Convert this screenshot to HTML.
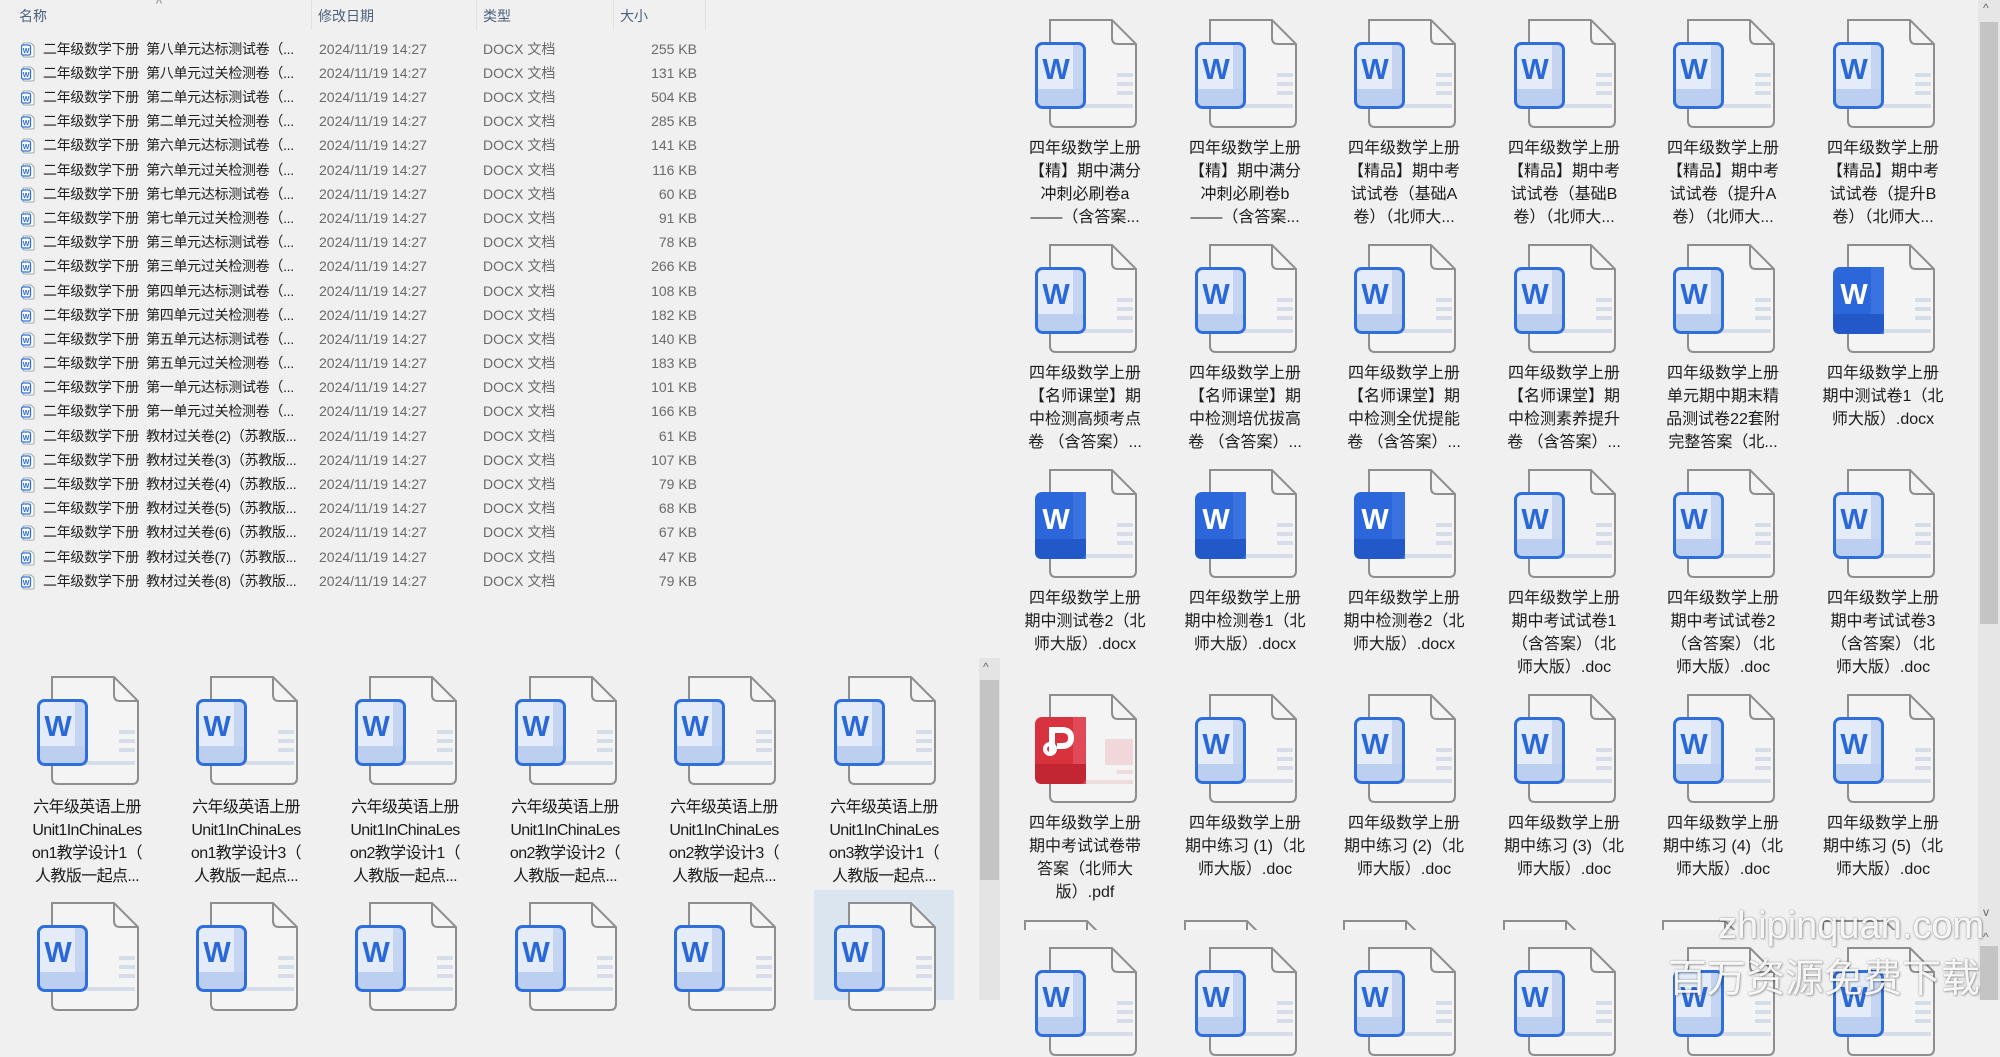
<!DOCTYPE html>
<html><head><meta charset="utf-8">
<style>
*{margin:0;padding:0;box-sizing:border-box}
body{width:2000px;height:1000px;overflow:hidden;background:#f0f0f0;position:relative;font-family:"Liberation Sans","Noto Sans CJK SC",sans-serif}
.a{position:absolute}
.hd{position:absolute;top:6px;font-size:14px;color:#4c607a}
.sep{position:absolute;top:0;width:1px;height:30px;background:#e2e2e2}
.row{position:absolute;left:0;height:24px;width:720px;font-size:14px;line-height:24px;white-space:nowrap}
.row svg{position:absolute;left:21px;top:5px}
.row .n{position:absolute;left:43px;color:#1e1e1e;letter-spacing:-0.3px}
.row .d{position:absolute;left:319px;color:#6a6a6a}
.row .t{position:absolute;left:483px;color:#6a6a6a}
.row .s{position:absolute;right:23px;color:#6a6a6a;text-align:right}
.it{position:absolute;width:150px}
.it svg{position:absolute;left:25px;top:0}
.lb{position:absolute;top:118px;left:0;width:150px;text-align:center;font-size:16px;line-height:23px;color:#1b1b1b;white-space:nowrap}
.lg .lb{top:120px;font-size:16px;letter-spacing:-0.6px}
.wm{position:absolute;color:rgba(255,255,255,0.92);text-shadow:0 0 2px rgba(0,0,0,.35),1px 1px 2px rgba(0,0,0,.25);font-family:"Liberation Sans","Noto Sans CJK SC",sans-serif;white-space:nowrap}
</style></head><body>
<svg width="0" height="0" style="position:absolute">
<defs>
<symbol id="pg" viewBox="0 0 102 110">
<path d="M15 1H77L101 25V102Q101 108 95 108H21Q15 108 15 102Z" fill="#f4f4f4" stroke="#8e8e8e" stroke-width="2"/>
<path d="M77 1V19Q77 25 83 25H101" fill="none" stroke="#8e8e8e" stroke-width="2"/>
<rect x="82" y="54" width="16" height="4" fill="#d6dde8"/><rect x="82" y="63" width="16" height="4" fill="#d6dde8"/><rect x="82" y="72" width="16" height="4" fill="#d6dde8"/><rect x="26" y="85" width="72" height="4" fill="#d6dde8"/>
</symbol>
<symbol id="wl" viewBox="0 0 102 110">
<use href="#pg"/>
<rect x="1.5" y="24.5" width="48" height="64" rx="6" fill="#e4ecf9"/>
<rect x="38" y="26" width="10" height="61" fill="#c5d5f1"/>
<rect x="3" y="70" width="45" height="17" fill="#bccff0"/>
<rect x="1.5" y="24.5" width="48" height="64" rx="6" fill="none" stroke="#2e6fdc" stroke-width="3"/>
<text x="21" y="60" font-family="Liberation Sans" font-weight="bold" font-size="29" fill="#2a68d8" text-anchor="middle">W</text>
</symbol>
<symbol id="wd" viewBox="0 0 102 110">
<use href="#pg"/>
<rect x="0" y="23" width="51" height="67" rx="7" fill="#2b67db"/>
<rect x="38" y="23" width="13" height="67" fill="#3a73e0"/>
<path d="M0 70H51V83Q51 90 44 90H7Q0 90 0 83Z" fill="#2258c8"/>
<text x="21" y="60" font-family="Liberation Sans" font-weight="bold" font-size="29" fill="#fff" text-anchor="middle">W</text>
</symbol>
<symbol id="pdf" viewBox="0 0 102 110">
<path d="M15 1H77L101 25V102Q101 108 95 108H21Q15 108 15 102Z" fill="#f4f4f4" stroke="#8e8e8e" stroke-width="2"/>
<path d="M77 1V19Q77 25 83 25H101" fill="none" stroke="#8e8e8e" stroke-width="2"/>
<rect x="70" y="45" width="28" height="26" fill="#f0d8da"/><rect x="82" y="76" width="16" height="4" fill="#eddcde"/><rect x="26" y="86" width="72" height="4" fill="#eddcde"/>
<rect x="0" y="23" width="51" height="67" rx="7" fill="#d8323f"/>
<rect x="38" y="23" width="13" height="67" fill="#e04a56"/>
<path d="M0 70H51V83Q51 90 44 90H7Q0 90 0 83Z" fill="#c32633"/>
<path d="M17 58V36H27Q36 36 36 44Q36 52 27 52H22" fill="none" stroke="#fff" stroke-width="6"/>
<circle cx="15" cy="55" r="5" fill="none" stroke="#fff" stroke-width="4"/>
</symbol>
<symbol id="sm" viewBox="0 0 14 16">
<path d="M3 1H10L13 4V14Q13 15 12 15H3Q2 15 2 14V2Q2 1 3 1Z" fill="#fff" stroke="#9aa" stroke-width="1"/>
<rect x="0.5" y="3" width="9" height="10" rx="1.5" fill="#fff" stroke="#2e6fdc" stroke-width="1.3"/>
<text x="5" y="11" font-size="7" font-weight="bold" fill="#2a68d8" text-anchor="middle" font-family="Liberation Sans">W</text>
</symbol>
</defs></svg>

<div class="hd" style="left:19px">名称</div>
<div class="a" style="left:156px;top:-4px;font-size:13px;color:#888">^</div>
<div class="hd" style="left:318px">修改日期</div>
<div class="hd" style="left:483px">类型</div>
<div class="hd" style="left:620px">大小</div>
<div class="sep" style="left:311px"></div><div class="sep" style="left:476px"></div><div class="sep" style="left:613px"></div><div class="sep" style="left:705px"></div>

<div class="row" style="top:37px"><svg width="14" height="16"><use href="#sm"/></svg><span class="n">二年级数学下册&nbsp;&nbsp;第八单元达标测试卷（...</span><span class="d">2024/11/19 14:27</span><span class="t">DOCX 文档</span><span class="s">255 KB</span></div>
<div class="row" style="top:61px"><svg width="14" height="16"><use href="#sm"/></svg><span class="n">二年级数学下册&nbsp;&nbsp;第八单元过关检测卷（...</span><span class="d">2024/11/19 14:27</span><span class="t">DOCX 文档</span><span class="s">131 KB</span></div>
<div class="row" style="top:85px"><svg width="14" height="16"><use href="#sm"/></svg><span class="n">二年级数学下册&nbsp;&nbsp;第二单元达标测试卷（...</span><span class="d">2024/11/19 14:27</span><span class="t">DOCX 文档</span><span class="s">504 KB</span></div>
<div class="row" style="top:109px"><svg width="14" height="16"><use href="#sm"/></svg><span class="n">二年级数学下册&nbsp;&nbsp;第二单元过关检测卷（...</span><span class="d">2024/11/19 14:27</span><span class="t">DOCX 文档</span><span class="s">285 KB</span></div>
<div class="row" style="top:133px"><svg width="14" height="16"><use href="#sm"/></svg><span class="n">二年级数学下册&nbsp;&nbsp;第六单元达标测试卷（...</span><span class="d">2024/11/19 14:27</span><span class="t">DOCX 文档</span><span class="s">141 KB</span></div>
<div class="row" style="top:158px"><svg width="14" height="16"><use href="#sm"/></svg><span class="n">二年级数学下册&nbsp;&nbsp;第六单元过关检测卷（...</span><span class="d">2024/11/19 14:27</span><span class="t">DOCX 文档</span><span class="s">116 KB</span></div>
<div class="row" style="top:182px"><svg width="14" height="16"><use href="#sm"/></svg><span class="n">二年级数学下册&nbsp;&nbsp;第七单元达标测试卷（...</span><span class="d">2024/11/19 14:27</span><span class="t">DOCX 文档</span><span class="s">60 KB</span></div>
<div class="row" style="top:206px"><svg width="14" height="16"><use href="#sm"/></svg><span class="n">二年级数学下册&nbsp;&nbsp;第七单元过关检测卷（...</span><span class="d">2024/11/19 14:27</span><span class="t">DOCX 文档</span><span class="s">91 KB</span></div>
<div class="row" style="top:230px"><svg width="14" height="16"><use href="#sm"/></svg><span class="n">二年级数学下册&nbsp;&nbsp;第三单元达标测试卷（...</span><span class="d">2024/11/19 14:27</span><span class="t">DOCX 文档</span><span class="s">78 KB</span></div>
<div class="row" style="top:254px"><svg width="14" height="16"><use href="#sm"/></svg><span class="n">二年级数学下册&nbsp;&nbsp;第三单元过关检测卷（...</span><span class="d">2024/11/19 14:27</span><span class="t">DOCX 文档</span><span class="s">266 KB</span></div>
<div class="row" style="top:279px"><svg width="14" height="16"><use href="#sm"/></svg><span class="n">二年级数学下册&nbsp;&nbsp;第四单元达标测试卷（...</span><span class="d">2024/11/19 14:27</span><span class="t">DOCX 文档</span><span class="s">108 KB</span></div>
<div class="row" style="top:303px"><svg width="14" height="16"><use href="#sm"/></svg><span class="n">二年级数学下册&nbsp;&nbsp;第四单元过关检测卷（...</span><span class="d">2024/11/19 14:27</span><span class="t">DOCX 文档</span><span class="s">182 KB</span></div>
<div class="row" style="top:327px"><svg width="14" height="16"><use href="#sm"/></svg><span class="n">二年级数学下册&nbsp;&nbsp;第五单元达标测试卷（...</span><span class="d">2024/11/19 14:27</span><span class="t">DOCX 文档</span><span class="s">140 KB</span></div>
<div class="row" style="top:351px"><svg width="14" height="16"><use href="#sm"/></svg><span class="n">二年级数学下册&nbsp;&nbsp;第五单元过关检测卷（...</span><span class="d">2024/11/19 14:27</span><span class="t">DOCX 文档</span><span class="s">183 KB</span></div>
<div class="row" style="top:375px"><svg width="14" height="16"><use href="#sm"/></svg><span class="n">二年级数学下册&nbsp;&nbsp;第一单元达标测试卷（...</span><span class="d">2024/11/19 14:27</span><span class="t">DOCX 文档</span><span class="s">101 KB</span></div>
<div class="row" style="top:399px"><svg width="14" height="16"><use href="#sm"/></svg><span class="n">二年级数学下册&nbsp;&nbsp;第一单元过关检测卷（...</span><span class="d">2024/11/19 14:27</span><span class="t">DOCX 文档</span><span class="s">166 KB</span></div>
<div class="row" style="top:424px"><svg width="14" height="16"><use href="#sm"/></svg><span class="n">二年级数学下册&nbsp;&nbsp;教材过关卷(2)（苏教版...</span><span class="d">2024/11/19 14:27</span><span class="t">DOCX 文档</span><span class="s">61 KB</span></div>
<div class="row" style="top:448px"><svg width="14" height="16"><use href="#sm"/></svg><span class="n">二年级数学下册&nbsp;&nbsp;教材过关卷(3)（苏教版...</span><span class="d">2024/11/19 14:27</span><span class="t">DOCX 文档</span><span class="s">107 KB</span></div>
<div class="row" style="top:472px"><svg width="14" height="16"><use href="#sm"/></svg><span class="n">二年级数学下册&nbsp;&nbsp;教材过关卷(4)（苏教版...</span><span class="d">2024/11/19 14:27</span><span class="t">DOCX 文档</span><span class="s">79 KB</span></div>
<div class="row" style="top:496px"><svg width="14" height="16"><use href="#sm"/></svg><span class="n">二年级数学下册&nbsp;&nbsp;教材过关卷(5)（苏教版...</span><span class="d">2024/11/19 14:27</span><span class="t">DOCX 文档</span><span class="s">68 KB</span></div>
<div class="row" style="top:520px"><svg width="14" height="16"><use href="#sm"/></svg><span class="n">二年级数学下册&nbsp;&nbsp;教材过关卷(6)（苏教版...</span><span class="d">2024/11/19 14:27</span><span class="t">DOCX 文档</span><span class="s">67 KB</span></div>
<div class="row" style="top:545px"><svg width="14" height="16"><use href="#sm"/></svg><span class="n">二年级数学下册&nbsp;&nbsp;教材过关卷(7)（苏教版...</span><span class="d">2024/11/19 14:27</span><span class="t">DOCX 文档</span><span class="s">47 KB</span></div>
<div class="row" style="top:569px"><svg width="14" height="16"><use href="#sm"/></svg><span class="n">二年级数学下册&nbsp;&nbsp;教材过关卷(8)（苏教版...</span><span class="d">2024/11/19 14:27</span><span class="t">DOCX 文档</span><span class="s">79 KB</span></div>

<div class="a" style="left:814px;top:890px;width:140px;height:110px;background:#dae5f0"></div>
<div class="it lg" style="left:12px;top:676px"><svg width="102" height="110"><use href="#wl"/></svg><div class="lb">六年级英语上册<br>Unit1InChinaLes<br>on1教学设计1（<br>人教版一起点...</div></div>
<div class="it lg" style="left:171px;top:676px"><svg width="102" height="110"><use href="#wl"/></svg><div class="lb">六年级英语上册<br>Unit1InChinaLes<br>on1教学设计3（<br>人教版一起点...</div></div>
<div class="it lg" style="left:330px;top:676px"><svg width="102" height="110"><use href="#wl"/></svg><div class="lb">六年级英语上册<br>Unit1InChinaLes<br>on2教学设计1（<br>人教版一起点...</div></div>
<div class="it lg" style="left:490px;top:676px"><svg width="102" height="110"><use href="#wl"/></svg><div class="lb">六年级英语上册<br>Unit1InChinaLes<br>on2教学设计2（<br>人教版一起点...</div></div>
<div class="it lg" style="left:649px;top:676px"><svg width="102" height="110"><use href="#wl"/></svg><div class="lb">六年级英语上册<br>Unit1InChinaLes<br>on2教学设计3（<br>人教版一起点...</div></div>
<div class="it lg" style="left:809px;top:676px"><svg width="102" height="110"><use href="#wl"/></svg><div class="lb">六年级英语上册<br>Unit1InChinaLes<br>on3教学设计1（<br>人教版一起点...</div></div>
<div class="it" style="left:12px;top:902px"><svg width="102" height="110"><use href="#wl"/></svg></div>
<div class="it" style="left:171px;top:902px"><svg width="102" height="110"><use href="#wl"/></svg></div>
<div class="it" style="left:330px;top:902px"><svg width="102" height="110"><use href="#wl"/></svg></div>
<div class="it" style="left:490px;top:902px"><svg width="102" height="110"><use href="#wl"/></svg></div>
<div class="it" style="left:649px;top:902px"><svg width="102" height="110"><use href="#wl"/></svg></div>
<div class="it" style="left:809px;top:902px"><svg width="102" height="110"><use href="#wl"/></svg></div>

<div class="a" style="left:979px;top:658px;width:21px;height:342px;background:#e4e4e4"></div>
<div class="a" style="left:983px;top:660px;font-size:12px;color:#666">^</div>
<div class="a" style="left:980px;top:680px;width:19px;height:200px;background:#c4c4c4"></div>

<div class="it" style="left:1010px;top:19px"><svg width="102" height="110"><use href="#wl"/></svg><div class="lb">四年级数学上册<br>【精】期中满分<br>冲刺必刷卷a<br>——（含答案...</div></div>
<div class="it" style="left:1170px;top:19px"><svg width="102" height="110"><use href="#wl"/></svg><div class="lb">四年级数学上册<br>【精】期中满分<br>冲刺必刷卷b<br>——（含答案...</div></div>
<div class="it" style="left:1329px;top:19px"><svg width="102" height="110"><use href="#wl"/></svg><div class="lb">四年级数学上册<br>【精品】期中考<br>试试卷（基础A<br>卷）（北师大...</div></div>
<div class="it" style="left:1489px;top:19px"><svg width="102" height="110"><use href="#wl"/></svg><div class="lb">四年级数学上册<br>【精品】期中考<br>试试卷（基础B<br>卷）（北师大...</div></div>
<div class="it" style="left:1648px;top:19px"><svg width="102" height="110"><use href="#wl"/></svg><div class="lb">四年级数学上册<br>【精品】期中考<br>试试卷（提升A<br>卷）（北师大...</div></div>
<div class="it" style="left:1808px;top:19px"><svg width="102" height="110"><use href="#wl"/></svg><div class="lb">四年级数学上册<br>【精品】期中考<br>试试卷（提升B<br>卷）（北师大...</div></div>

<div class="it" style="left:1010px;top:244px"><svg width="102" height="110"><use href="#wl"/></svg><div class="lb">四年级数学上册<br>【名师课堂】期<br>中检测高频考点<br>卷 （含答案）...</div></div>
<div class="it" style="left:1170px;top:244px"><svg width="102" height="110"><use href="#wl"/></svg><div class="lb">四年级数学上册<br>【名师课堂】期<br>中检测培优拔高<br>卷 （含答案）...</div></div>
<div class="it" style="left:1329px;top:244px"><svg width="102" height="110"><use href="#wl"/></svg><div class="lb">四年级数学上册<br>【名师课堂】期<br>中检测全优提能<br>卷 （含答案）...</div></div>
<div class="it" style="left:1489px;top:244px"><svg width="102" height="110"><use href="#wl"/></svg><div class="lb">四年级数学上册<br>【名师课堂】期<br>中检测素养提升<br>卷 （含答案）...</div></div>
<div class="it" style="left:1648px;top:244px"><svg width="102" height="110"><use href="#wl"/></svg><div class="lb">四年级数学上册<br>单元期中期末精<br>品测试卷22套附<br>完整答案（北...</div></div>
<div class="it" style="left:1808px;top:244px"><svg width="102" height="110"><use href="#wd"/></svg><div class="lb">四年级数学上册<br>期中测试卷1（北<br>师大版）.docx</div></div>

<div class="it" style="left:1010px;top:469px"><svg width="102" height="110"><use href="#wd"/></svg><div class="lb">四年级数学上册<br>期中测试卷2（北<br>师大版）.docx</div></div>
<div class="it" style="left:1170px;top:469px"><svg width="102" height="110"><use href="#wd"/></svg><div class="lb">四年级数学上册<br>期中检测卷1（北<br>师大版）.docx</div></div>
<div class="it" style="left:1329px;top:469px"><svg width="102" height="110"><use href="#wd"/></svg><div class="lb">四年级数学上册<br>期中检测卷2（北<br>师大版）.docx</div></div>
<div class="it" style="left:1489px;top:469px"><svg width="102" height="110"><use href="#wl"/></svg><div class="lb">四年级数学上册<br>期中考试试卷1<br>（含答案）（北<br>师大版）.doc</div></div>
<div class="it" style="left:1648px;top:469px"><svg width="102" height="110"><use href="#wl"/></svg><div class="lb">四年级数学上册<br>期中考试试卷2<br>（含答案）（北<br>师大版）.doc</div></div>
<div class="it" style="left:1808px;top:469px"><svg width="102" height="110"><use href="#wl"/></svg><div class="lb">四年级数学上册<br>期中考试试卷3<br>（含答案）（北<br>师大版）.doc</div></div>

<div class="it" style="left:1010px;top:694px"><svg width="102" height="110"><use href="#pdf"/></svg><div class="lb">四年级数学上册<br>期中考试试卷带<br>答案（北师大<br>版）.pdf</div></div>
<div class="it" style="left:1170px;top:694px"><svg width="102" height="110"><use href="#wl"/></svg><div class="lb">四年级数学上册<br>期中练习 (1)（北<br>师大版）.doc</div></div>
<div class="it" style="left:1329px;top:694px"><svg width="102" height="110"><use href="#wl"/></svg><div class="lb">四年级数学上册<br>期中练习 (2)（北<br>师大版）.doc</div></div>
<div class="it" style="left:1489px;top:694px"><svg width="102" height="110"><use href="#wl"/></svg><div class="lb">四年级数学上册<br>期中练习 (3)（北<br>师大版）.doc</div></div>
<div class="it" style="left:1648px;top:694px"><svg width="102" height="110"><use href="#wl"/></svg><div class="lb">四年级数学上册<br>期中练习 (4)（北<br>师大版）.doc</div></div>
<div class="it" style="left:1808px;top:694px"><svg width="102" height="110"><use href="#wl"/></svg><div class="lb">四年级数学上册<br>期中练习 (5)（北<br>师大版）.doc</div></div>

<div class="a" style="left:1000px;top:920px;width:978px;height:10px;overflow:hidden">
<svg class="a" style="left:10px;top:0" width="102" height="110"><use href="#pg"/></svg>
<svg class="a" style="left:170px;top:0" width="102" height="110"><use href="#pg"/></svg>
<svg class="a" style="left:329px;top:0" width="102" height="110"><use href="#pg"/></svg>
<svg class="a" style="left:489px;top:0" width="102" height="110"><use href="#pg"/></svg>
<svg class="a" style="left:648px;top:0" width="102" height="110"><use href="#pg"/></svg>
<svg class="a" style="left:808px;top:0" width="102" height="110"><use href="#pg"/></svg>
</div>
<div class="it" style="left:1010px;top:947px"><svg width="102" height="110"><use href="#wl"/></svg></div>
<div class="it" style="left:1170px;top:947px"><svg width="102" height="110"><use href="#wl"/></svg></div>
<div class="it" style="left:1329px;top:947px"><svg width="102" height="110"><use href="#wl"/></svg></div>
<div class="it" style="left:1489px;top:947px"><svg width="102" height="110"><use href="#wl"/></svg></div>
<div class="it" style="left:1648px;top:947px"><svg width="102" height="110"><use href="#wl"/></svg></div>
<div class="it" style="left:1808px;top:947px"><svg width="102" height="110"><use href="#wl"/></svg></div>

<div class="a" style="left:1978px;top:0;width:22px;height:1000px;background:#e6e6e6"></div>
<div class="a" style="left:1983px;top:1px;font-size:12px;color:#666">^</div>
<div class="a" style="left:1980px;top:22px;width:18px;height:602px;background:#c4c4c4"></div>
<div class="a" style="left:1983px;top:905px;font-size:12px;color:#666">v</div>
<div class="a" style="left:1983px;top:930px;font-size:12px;color:#666">^</div>
<div class="a" style="left:1980px;top:946px;width:18px;height:54px;background:#c4c4c4"></div>

<div class="wm" style="left:1718px;top:905px;font-size:38px">zhipinquan.com</div>
<div class="wm" style="left:1668px;top:948px;font-size:39px;font-family:'Noto Sans CJK SC',sans-serif">百万资源免费下载</div>
</body></html>
